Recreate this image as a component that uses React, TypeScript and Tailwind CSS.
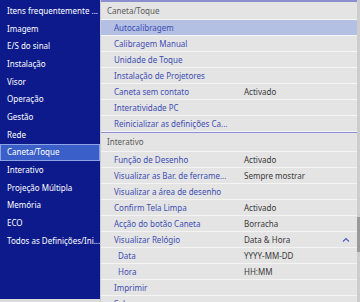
const menu = [
  'Itens frequentemente ...',
  'Imagem',
  'E/S do sinal',
  'Instalação',
  'Visor',
  'Operação',
  'Gestão',
  'Rede',
  'Caneta/Toque',
  'Interativo',
  'Projeção Múltipla',
  'Memória',
  'ECO',
  'Todos as Definições/Ini...',
];

type Row = { label: string; value?: string; indent?: boolean; selected?: boolean; open?: boolean };

const penRows: Row[] = [
  { label: 'Autocalibragem', selected: true },
  { label: 'Calibragem Manual' },
  { label: 'Unidade de Toque' },
  { label: 'Instalação de Projetores' },
  { label: 'Caneta sem contato', value: 'Activado' },
  { label: 'Interatividade PC' },
  { label: 'Reinicializar as definições Ca...' },
];

const interRows: Row[] = [
  { label: 'Função de Desenho', value: 'Activado' },
  { label: 'Visualizar as Bar. de ferrame...', value: 'Sempre mostrar' },
  { label: 'Visualizar a área de desenho' },
  { label: 'Confirm Tela Limpa', value: 'Activado' },
  { label: 'Acção do botão Caneta', value: 'Borracha' },
  { label: 'Visualizar Relógio', value: 'Data & Hora', open: true },
  { label: 'Data', value: 'YYYY-MM-DD', indent: true },
  { label: 'Hora', value: 'HH:MM', indent: true },
  { label: 'Imprimir' },
  { label: 'Salvar' },
];

function SettingRow({ row }: { row: Row }) {
  return (
    <div
      className={`flex items-center h-[16px] shrink-0 border-b border-[#f4f4f4] ${
        row.selected ? 'bg-[#b3bfe3]' : ''
      }`}
    >
      <div
        className={`w-[143px] shrink-0 whitespace-nowrap text-[#3d4db2] ${row.indent ? 'pl-[17px]' : 'pl-[13px]'}`}
      >
        {row.label}
      </div>
      <div className="flex-1 whitespace-nowrap text-[#3a3a3a]">{row.value}</div>
      {row.open && (
        <svg width="8" height="6" viewBox="0 0 8 6" className="mr-[7px]">
          <path d="M1 4.5 L4 1.5 L7 4.5" fill="none" stroke="#4a5bc0" strokeWidth="1.1" />
        </svg>
      )}
    </div>
  );
}

export default function App() {
  return (
    <div
      className="w-[360px] h-[302px] flex bg-[#dcdcdc] overflow-hidden text-[8px] leading-none"
      style={{ fontFamily: '"Noto Sans", "Open Sans", sans-serif' }}
    >
      {/* left category list */}
      <div className="w-[100px] h-[299px] shrink-0 bg-[#0c1a8c] pt-[2px] flex flex-col">
        {menu.map((m) => (
          <div
            key={m}
            className={`h-[17.7px] shrink-0 flex items-center text-white whitespace-nowrap ${
              m === 'Caneta/Toque' ? 'bg-[#3b5fc8] border border-[#8ea2e6] pl-[6px]' : 'pl-[7px]'
            }`}
          >
            {m}
          </div>
        ))}
      </div>

      <div className="w-[1px] bg-[#c9c9d3] shrink-0" />

      {/* right settings list */}
      <div className="flex-1 flex flex-col bg-[#e4e4e4] overflow-hidden">
        <div className="h-[2px] bg-[#8b8fcf] shrink-0" />
        <div className="h-[18px] shrink-0 flex items-center pl-[6px] text-[#5a5a5a] border-b border-[#f4f4f4]">
          Caneta/Toque
        </div>
        {penRows.map((r) => (
          <SettingRow key={r.label} row={r} />
        ))}
        <div className="h-[1px] bg-[#8b8fcf] shrink-0" />
        <div className="h-[19px] shrink-0 flex items-center pl-[6px] text-[#5a5a5a] border-b border-[#f4f4f4]">
          Interativo
        </div>
        {interRows.map((r) => (
          <SettingRow key={r.label} row={r} />
        ))}
      </div>

      {/* scrollbar */}
      <div className="w-[3px] shrink-0 bg-[#cdcdcd] flex flex-col">
        <div className="h-[217px]" />
        <div className="h-[35px] bg-[#9a9a9a]" />
      </div>
    </div>
  );
}
